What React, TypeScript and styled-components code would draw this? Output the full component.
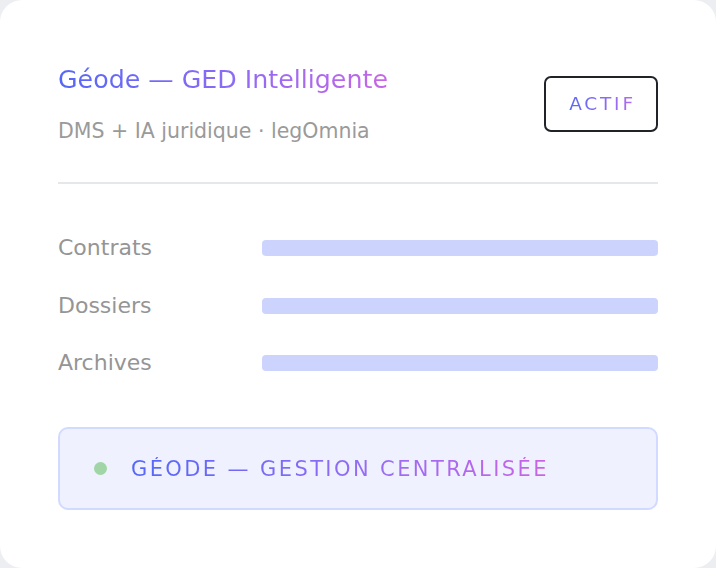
import React from "react";
import styled, { createGlobalStyle } from "styled-components";

const Global = createGlobalStyle`
  html, body { margin: 0; padding: 0; background: #eceef2; }
  body { font-family: "DejaVu Sans", "Open Sans", sans-serif; }
  * { box-sizing: border-box; }
`;

const Card = styled.div`
  width: 716px;
  height: 568px;
  background: #ffffff;
  border-radius: 22px;
  padding: 64px 58px 58px 58px;
  display: flex;
  flex-direction: column;
`;

const Header = styled.div`
  display: flex;
  align-items: center;
  justify-content: space-between;
  padding-bottom: 39px;
  border-bottom: 2px solid #e6e7ea;
`;

const TitleBlock = styled.div`
  display: flex;
  flex-direction: column;
  gap: 23px;
`;

const gradientText = `
  -webkit-background-clip: text;
  background-clip: text;
  color: transparent;
`;

const Title = styled.h1`
  margin: 0;
  font-size: 25.3px;
  font-weight: 400;
  line-height: 32px;
  background-image: linear-gradient(90deg, #5567f8 0%, #8f6bf5 55%, #c766e6 100%);
  ${gradientText}
`;

const Subtitle = styled.div`
  font-size: 20.5px;
  line-height: 24px;
  color: #9a9a9a;
`;

const Badge = styled.div`
  width: 114px;
  height: 56px;
  border: 2px solid #202328;
  border-radius: 7px;
  display: flex;
  align-items: center;
  justify-content: center;
  padding-left: 3px;
`;

const BadgeText = styled.span`
  font-size: 18.5px;
  letter-spacing: 2.8px;
  background-image: linear-gradient(90deg, #5a68f8 0%, #b56cf0 100%);
  ${gradientText}
`;

const Rows = styled.div`
  display: flex;
  flex-direction: column;
  gap: 33.5px;
  padding-top: 52px;
`;

const Row = styled.div`
  display: flex;
  align-items: center;
  height: 24px;
`;

const Label = styled.div`
  width: 204px;
  font-size: 22px;
  color: #959595;
  line-height: 24px;
`;

const Bar = styled.div`
  flex: 1;
  height: 16px;
  border-radius: 4px;
  background: #ccd4fd;
`;

const Status = styled.div`
  margin-top: auto;
  height: 83px;
  border: 2px solid #d2daff;
  background: #eff2fe;
  border-radius: 10px;
  display: flex;
  align-items: center;
  padding-left: 34px;
  gap: 24px;
`;

const Dot = styled.span`
  width: 13px;
  height: 13px;
  border-radius: 50%;
  background: #a1d4a6;
`;

const StatusText = styled.span`
  font-size: 21px;
  letter-spacing: 2.4px;
  background-image: linear-gradient(90deg, #5567f8 0%, #9a6cf4 60%, #c964e6 100%);
  ${gradientText}
`;

const rows = ["Contrats", "Dossiers", "Archives"];

export default function App() {
  return (
    <>
      <Global />
      <Card>
        <Header>
          <TitleBlock>
            <Title>Géode — GED Intelligente</Title>
            <Subtitle>DMS + IA juridique · legOmnia</Subtitle>
          </TitleBlock>
          <Badge>
            <BadgeText>ACTIF</BadgeText>
          </Badge>
        </Header>
        <Rows>
          {rows.map((r) => (
            <Row key={r}>
              <Label>{r}</Label>
              <Bar />
            </Row>
          ))}
        </Rows>
        <Status>
          <Dot />
          <StatusText>GÉODE — GESTION CENTRALISÉE</StatusText>
        </Status>
      </Card>
    </>
  );
}
